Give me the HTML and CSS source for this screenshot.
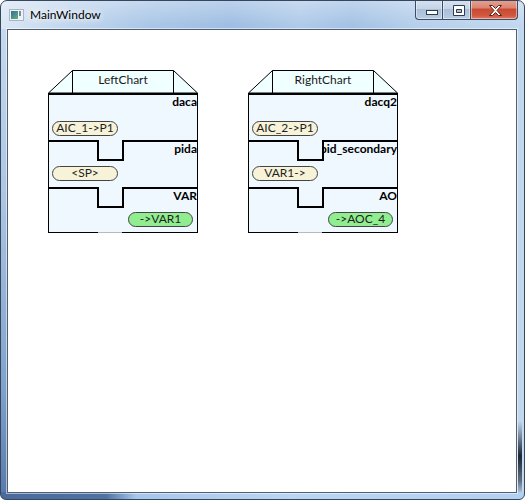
FILE: index.html
```html
<!DOCTYPE html>
<html>
<head>
<meta charset="utf-8">
<title>MainWindow</title>
<link rel="stylesheet" href="styles.css">
</head>
<body>
<div class="window">
  <div class="titlebar">
    <svg class="app-icon" width="15" height="12" viewBox="0 0 15 12">
      <defs>
        <linearGradient id="ig" x1="0" y1="0" x2="1" y2="1">
          <stop offset="0" stop-color="#2f6f9a"/>
          <stop offset="1" stop-color="#63b27c"/>
        </linearGradient>
      </defs>
      <rect x="0.5" y="0.5" width="14" height="11" fill="#eef2f6" stroke="#a9b5c2"/>
      <rect x="2" y="2" width="7" height="8" fill="url(#ig)"/>
      <rect x="10" y="2" width="2" height="5" fill="#7b8a99"/>
    </svg>
    <span class="title">MainWindow</span>
    <div class="caption-buttons">
      <div class="cbtn cmin">
        <svg width="12" height="5" viewBox="0 0 12 5"><rect x="0.5" y="0.5" width="11" height="4" fill="#fff" stroke="#2d3b4f"/></svg>
      </div>
      <div class="cbtn cmax">
        <svg width="12" height="11" viewBox="0 0 12 11"><path d="M0.5 0.5 H11.5 V10.5 H0.5 Z M3.5 4.5 V7.5 H8.5 V4.5 Z" fill="#fff" fill-rule="evenodd" stroke="#2d3b4f"/></svg>
      </div>
      <div class="cbtn cclose">
        <svg width="13" height="11" viewBox="0 0 13 11"><path d="M0.5 0.5 H3.5 L6.5 3.5 L9.5 0.5 H12.5 L8 5.5 L12.5 10.5 H9.5 L6.5 7.5 L3.5 10.5 H0.5 L5 5.5 Z" fill="#fff" stroke="#5a1e12"/></svg>
      </div>
    </div>
  </div>
  <div class="client">
    <div class="charts">
      <div class="chart">
        <div class="chart-tab">
          <svg class="tab-shape" width="150" height="23" viewBox="0 0 150 23">
            <path d="M24.5 0.5 H125.5 L149.5 23 H0.5 Z" fill="#f0ffff" stroke="#000"/>
            <path d="M24.5 0.5 V23 M125.5 0.5 V23" stroke="#000"/>
          </svg>
          <span class="tab-title">LeftChart</span>
        </div>
        <div class="chart-body">
          <div class="section s1">
            <div class="label"><span>daca</span></div>
            <div class="pill in">AIC_1-&gt;P1</div>
          </div>
          <div class="section s2">
            <div class="notch"></div>
            <div class="label after-notch"><span>pida</span></div>
            <div class="pill in">&lt;SP&gt;</div>
          </div>
          <div class="section s3">
            <div class="notch"></div>
            <div class="label after-notch"><span>VAR</span></div>
            <div class="pill out">-&gt;VAR1</div>
          </div>
        </div>
      </div>
      <div class="chart">
        <div class="chart-tab">
          <svg class="tab-shape" width="150" height="23" viewBox="0 0 150 23">
            <path d="M24.5 0.5 H125.5 L149.5 23 H0.5 Z" fill="#f0ffff" stroke="#000"/>
            <path d="M24.5 0.5 V23 M125.5 0.5 V23" stroke="#000"/>
          </svg>
          <span class="tab-title">RightChart</span>
        </div>
        <div class="chart-body">
          <div class="section s1">
            <div class="label"><span>dacq2</span></div>
            <div class="pill in">AIC_2-&gt;P1</div>
          </div>
          <div class="section s2">
            <div class="notch"></div>
            <div class="label after-notch"><span>pid_secondary</span></div>
            <div class="pill in">VAR1-&gt;</div>
          </div>
          <div class="section s3">
            <div class="notch"></div>
            <div class="label after-notch"><span>AO</span></div>
            <div class="pill out">-&gt;AOC_4</div>
          </div>
        </div>
      </div>
    </div>
  </div>
</div>
</body>
</html>
```
FILE: styles.css
```css
* { box-sizing: border-box; }

html, body {
  margin: 0;
  padding: 0;
  background: #fff;
}

body {
  width: 525px;
  height: 500px;
  overflow: hidden;
  font-family: Lato, "Open Sans", "DejaVu Sans", sans-serif;
  font-size: 12px;
  color: #000;
}

.window {
  width: 525px;
  height: 500px;
  border: 1px solid #34475f;
  border-radius: 7px 7px 6px 6px;
  display: flex;
  flex-direction: column;
  overflow: hidden;
  background:
    linear-gradient(to bottom, rgba(255,255,255,0.3) 0, rgba(255,255,255,0) 24px) left top / 100% 28px no-repeat,
    linear-gradient(to right, #4a6b9b 0, #4f72a3 105px, #a6c6ea 135px, #b9d5f3 55%, #b2d0f1 100%) left bottom / 100% 7px no-repeat,
    linear-gradient(to bottom, rgba(20,28,40,0) 0, rgba(20,28,40,0) 420px, rgba(20,28,40,0.95) 455px, rgba(20,28,40,0.55) 480px, rgba(20,28,40,0) 495px) right 2px top / 4px 100% no-repeat,
    linear-gradient(to bottom, #c6d9ee 0, #abc5e3 170px, #7fa1cb 360px, #5679a9 100%) left 0 top 28px / 7px calc(100% - 28px) no-repeat,
    linear-gradient(to right, #dbe7f4 0, #c4d8ee 60px, #aac7e7 150px, #9fbee3 230px, #b0cbe9 300px, #a4c2e5 350px, #b8d0eb 420px, #c2d8ef 100%);
}

/* ---------- title bar ---------- */
.titlebar {
  height: 28px;
  flex: none;
  display: flex;
  align-items: flex-start;
}

.app-icon {
  display: block;
  margin: 8px 0 0 8px;
}

.title {
  margin: 6px 0 0 6px;
  line-height: 15px;
  font-size: 12px;
  color: #000;
  text-shadow: 0 0 6px #fff, 0 0 10px rgba(255,255,255,0.8);
}

.caption-buttons {
  margin: -1px 6px 0 auto;
  display: flex;
}

.cbtn {
  height: 20px;
  border: 1px solid #3b4c63;
  border-top: 0;
  display: flex;
  align-items: flex-start;
  box-shadow: inset 0 0 0 1px rgba(255,255,255,0.45);
}

.cbtn svg { display: block; }

.cmin {
  width: 27px;
  border-right: 0;
  border-radius: 0 0 0 4px;
  padding: 10px 0 0 10px;
  background: linear-gradient(to bottom, #d6e2ef 0, #c5d5e8 45%, #a9bfd9 50%, #b8cce3 100%);
}

.cmax {
  width: 28px;
  border-right: 0;
  padding: 5px 0 0 10px;
  background: linear-gradient(to bottom, #d6e2ef 0, #c5d5e8 45%, #a9bfd9 50%, #b8cce3 100%);
}

.cclose {
  width: 48px;
  border-radius: 0 0 4px 0;
  padding: 5px 0 0 18px;
  background: linear-gradient(to bottom, #e6a394 0, #dc8572 40%, #c84a33 50%, #d2553d 80%, #e07a62 100%);
}

/* ---------- client area ---------- */
.client {
  flex: 1;
  margin: 0 7px 6px 6px;
  border: 1px solid #4f5e70;
  background: #fff;
  box-shadow: 0 0 0 1px rgba(255,255,255,0.5);
  padding: 40px;
}

.charts {
  display: flex;
  gap: 50px;
  align-items: flex-start;
}

.chart {
  width: 150px;
}

.chart-tab {
  display: grid;
  height: 23px;
}

.chart-tab > * {
  grid-area: 1 / 1;
}

.tab-shape {
  display: block;
  overflow: visible;
}

.tab-title {
  justify-self: center;
  padding-top: 2px;
  line-height: 15px;
  font-size: 12px;
  color: #1a1a1a;
}

.chart-body {
  position: relative;
  background: #f0f8ff;
  border: 1px solid #000;
  border-top: 2px solid #000;
}

.chart-body::after {
  content: "";
  position: absolute;
  left: 49px;
  bottom: -1px;
  width: 24px;
  height: 1px;
  background: #b9b9b9;
}

.section {
  position: relative;
}

.s1 { height: 45px; }
.s2 { height: 47px; border-top: 2px solid #000; }
.s3 { height: 45px; border-top: 2px solid #000; }

.notch {
  position: absolute;
  top: -2px;
  left: 48px;
  width: 27px;
  height: 21px;
  border: 2px solid #000;
  border-top: 0;
  background: #f0f8ff;
}

.label {
  height: 14px;
  line-height: 14px;
  display: flex;
  justify-content: flex-end;
  overflow: hidden;
  white-space: nowrap;
  font-weight: 700;
  font-size: 12px;
  color: #000;
}

.label span {
  flex: none;
}

.label.after-notch {
  margin-left: 75px;
}

.pill {
  display: block;
  width: 66px;
  height: 15px;
  border: 1px solid #444;
  border-radius: 8px;
  background: #f7f3d8;
  font-size: 12px;
  line-height: 12px;
  padding-bottom: 1px;
  text-align: center;
  color: #1e1e1e;
  white-space: nowrap;
}

.pill.in { margin-left: 3px; }

.pill.out {
  width: 65px;
  margin-left: auto;
  margin-right: 4px;
  background: #90ee90;
}

.s1 .pill { margin-top: 12px; }
.s2 .pill { margin-top: 10px; }
.s3 .pill { margin-top: 9px; }
```
